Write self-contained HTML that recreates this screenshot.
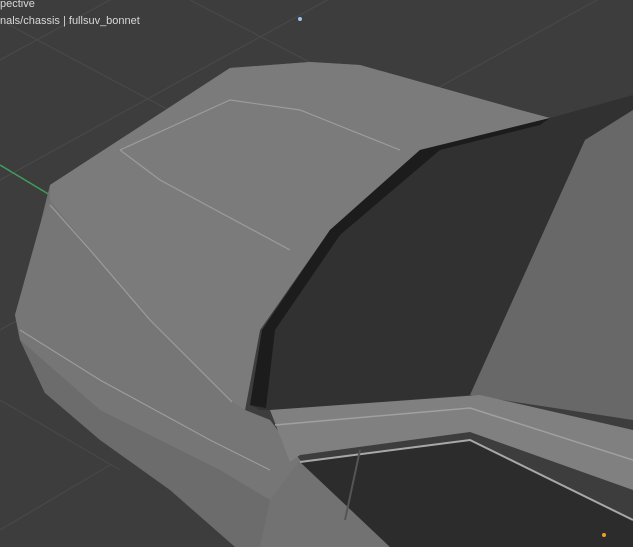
<!DOCTYPE html>
<html><head><style>
html,body{margin:0;padding:0;width:633px;height:547px;overflow:hidden;background:#3d3d3d}
.t{position:absolute;left:0;font:11px "Liberation Sans",sans-serif;color:#d8d8d8}
</style></head><body>
<svg width="633" height="547" style="position:absolute;left:0;top:0">
<rect width="633" height="547" fill="#3d3d3d"/>
<g stroke="#4a4a4a" stroke-width="1">
<line x1="0" y1="60" x2="330" y2="-120"/>
<line x1="0" y1="180" x2="400" y2="-40"/>
<line x1="0" y1="330" x2="633" y2="-20"/>
<line x1="0" y1="20" x2="300" y2="180"/>
<line x1="190" y1="0" x2="633" y2="230"/>
<line x1="0" y1="400" x2="120" y2="470"/>
<line x1="0" y1="530" x2="110" y2="465"/>
</g>
<line x1="0" y1="165" x2="50" y2="195" stroke="#3f9e5a" stroke-width="1.5"/>
<polygon points="50,185 230,68 310,62 360,65 520,110 550,118 330,230 260,330 245,410 270,420 300,460 390,547 235,547 170,490 100,440 45,393 20,340 15,315 40,225" fill="#727272"/>
<polygon points="45,393 100,440 170,490 235,547 255,547 180,480 110,430 60,400" fill="#2c2c2c"/>
<polygon points="50,185 230,68 310,62 360,65 520,110 550,118 420,150 330,230 260,330 245,410 232,402 150,320 90,250 50,200" fill="#7b7b7b"/>
<polygon points="40,225 50,200 90,250 150,320 232,402 245,410 270,420 300,460 270,500 220,470 100,410 20,340 15,315" fill="#767676"/>
<polygon points="20,340 100,410 220,470 270,500 260,547 235,547 170,490 100,440 45,393" fill="#6c6c6c"/>
<polygon points="550,118 633,95 633,110 585,140 470,395 280,410 260,410 250,405 262,330 330,230 420,150" fill="#313131"/>
<polygon points="550,118 540,125 440,150 340,235 275,330 266,408 250,405 262,330 330,230 420,150" fill="#1c1c1c"/>
<polygon points="633,110 585,140 470,395 633,420" fill="#686868"/>
<polygon points="270,410 480,395 633,430 633,490 470,432 300,455 290,462" fill="#808080"/>
<polyline points="275,425 470,408 633,460" fill="none" stroke="#a0a0a0" stroke-width="1.5"/>
<polygon points="300,462 470,440 633,520 633,547 390,547" fill="#2c2c2c"/>
<polyline points="300,462 470,440 633,520" fill="none" stroke="#a8a8a8" stroke-width="2"/>
<line x1="360" y1="450" x2="345" y2="520" stroke="#555" stroke-width="2"/>
<g fill="none" stroke="#9c9c9c" stroke-width="1.2">
<polyline points="120,150 230,100 300,110 400,150"/>
<polyline points="120,150 160,180 290,250"/>
<polyline points="50,205 90,250 150,320 232,402"/>
<polyline points="20,330 100,380 210,440 270,470"/>
</g>
<circle cx="300" cy="19" r="2" fill="#9ec4ee"/>
<circle cx="604" cy="535" r="2" fill="#f0a020"/>
</svg>
<div class="t" style="top:-2px">pective</div>
<div class="t" style="top:15px">nals/chassis | fullsuv_bonnet</div>
</body></html>
